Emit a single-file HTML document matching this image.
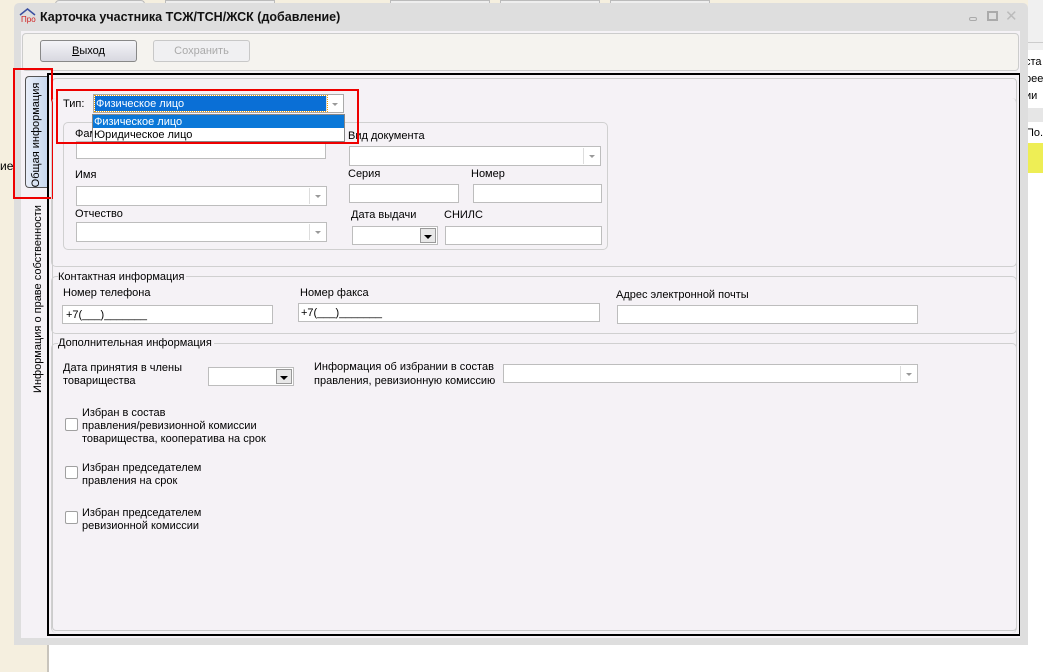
<!DOCTYPE html>
<html><head><meta charset="utf-8"><style>
*{box-sizing:border-box;margin:0;padding:0}
body{width:1043px;height:672px;overflow:hidden;background:#f5efdf;position:relative;font-family:"Liberation Sans",sans-serif;font-size:11px;color:#000}
.a{position:absolute}
.in{position:absolute;background:#fff;border:1px solid #bdbdbd}
.lbl{position:absolute;white-space:nowrap;font-size:11px;margin-top:1px}
.arr{position:absolute;right:1px;top:1px;bottom:1px;width:16px;border-left:1px solid #ddd}
.arr:after{content:"";position:absolute;left:5px;top:50%;margin-top:-1px;border:3px solid transparent;border-top:3px solid #999}
.arr2{position:absolute;right:1px;top:1px;bottom:1px;width:16px;background:#e8e8e8;border:1px solid #999}
.arr2:after{content:"";position:absolute;left:3px;top:50%;margin-top:-1px;border:4px solid transparent;border-top:4px solid #000}
.grp{position:absolute;border:1px solid #d0d0d0;border-radius:5px}
.cb{position:absolute;width:13px;height:13px;border:1px solid #a0a0a0;border-radius:2px;background:#fff}
</style></head><body>
<div class="a" style="left:1028px;top:0;width:15px;height:672px;background:#f0f0f0"></div>
<div class="a" style="left:1028px;top:42px;width:15px;height:1px;background:#ccc"></div>
<div class="a" style="left:1028px;top:50px;width:15px;height:100px;background:#fff"></div>
<div class="lbl" style="left:1025px;top:55px">ста</div>
<div class="lbl" style="left:1025px;top:72px">рее</div>
<div class="lbl" style="left:1025px;top:89px">ии</div>
<div class="a" style="left:1028px;top:108px;width:15px;height:14px;background:#e6e6e6"></div>
<div class="lbl" style="left:1026px;top:126px">По.</div>
<div class="a" style="left:1028px;top:143px;width:15px;height:30px;background:#eeee55"></div>
<div class="a" style="left:1028px;top:173px;width:15px;height:499px;background:#fff"></div>
<div class="a" style="left:47px;top:645px;width:981px;height:27px;background:#fff;border-left:2px solid #c8c4bc"></div>
<div class="lbl" style="left:0;top:158px;font-size:12px">ие</div>
<div class="a" style="left:55px;top:0;width:90px;height:4px;border:1px solid #bbb;border-bottom:0;border-radius:4px 4px 0 0;background:#eee"></div>
<div class="a" style="left:165px;top:0;width:110px;height:4px;border:1px solid #bbb;border-bottom:0;background:#eee"></div>
<div class="a" style="left:390px;top:0;width:100px;height:4px;border:1px solid #bbb;background:#eee"></div>
<div class="a" style="left:500px;top:0;width:100px;height:4px;border:1px solid #bbb;background:#eee"></div>
<div class="a" style="left:610px;top:0;width:100px;height:4px;border:1px solid #bbb;background:#eee"></div>
<div class="a" style="left:14px;top:3px;width:1014px;height:642px;background:#dedede;border-radius:5px 5px 0 0"></div>
<div class="a" style="left:21px;top:31px;width:999px;height:607px;background:#f5f2f6"></div>
<svg class="a" style="left:19px;top:8px" width="17" height="17" viewBox="0 0 17 17"><path d="M1 7 L8.5 1 L16 7" fill="none" stroke="#3a4fa0" stroke-width="1.5"/><text x="2" y="14" font-size="8" fill="#d02020" font-family="Liberation Sans">Про</text></svg>
<div class="lbl" style="left:40px;top:9px;font-weight:bold;font-size:12.5px;color:#111">Карточка участника ТСЖ/ТСН/ЖСК (добавление)</div>
<div class="a" style="left:969px;top:17px;width:8px;height:4px;border:1px solid #aaa;border-radius:2px"></div>
<div class="a" style="left:987px;top:11px;width:11px;height:10px;border:2px solid #aaa"></div>
<div class="lbl" style="left:1005px;top:6px;font-size:15px;color:#bbb">✕</div>
<div class="a" style="left:22px;top:33px;width:997px;height:38px;background:#f5f3ef;border:1px solid #ccc;border-radius:4px"></div>
<div class="a" style="left:40px;top:40px;width:97px;height:22px;border:1px solid #888;border-radius:3px;background:linear-gradient(#f4f4f8,#d8d8e0);text-align:center;line-height:21px"><u>В</u>ыход</div>
<div class="a" style="left:153px;top:40px;width:97px;height:22px;border:1px solid #c8c8c8;border-radius:3px;background:#f0f0f2;text-align:center;line-height:21px;color:#aaa">Сохранить</div>
<div class="a" style="left:47px;top:73px;width:973px;height:563px;border:2px solid #000;border-right-width:1px;background:#f5f2f6"></div>
<div class="a" style="left:52px;top:78px;width:965px;height:553px;border:1px solid #ccc;border-radius:4px"></div>
<div class="a" style="left:25px;top:76px;width:22px;height:112px;background:linear-gradient(90deg,#e8eef8,#c8d8ef);border:1px solid #555;border-right:0;border-radius:4px 0 0 4px"></div>
<div class="lbl" style="left:36px;top:134px;transform:translate(-50%,-50%) rotate(-90deg)">Общая информация</div>
<div class="lbl" style="left:38px;top:298px;transform:translate(-50%,-50%) rotate(-90deg)">Информация о праве собственности</div>
<div class="a" style="left:13px;top:68px;width:40px;height:131px;border:2px solid #e00"></div>
<div class="grp" style="left:51px;top:98px;width:966px;height:169px;border-top:0"></div>
<div class="grp" style="left:63px;top:122px;width:545px;height:128px"></div>
<div class="lbl" style="left:75px;top:127px">Фам</div>
<div class="in" style="left:76px;top:141px;width:250px;height:18px"></div>
<div class="lbl" style="left:75px;top:168px">Имя</div>
<div class="in" style="left:76px;top:186px;width:251px;height:20px"><div class="arr"></div></div>
<div class="lbl" style="left:75px;top:207px">Отчество</div>
<div class="in" style="left:76px;top:222px;width:251px;height:20px"><div class="arr"></div></div>
<div class="lbl" style="left:348px;top:129px">Вид документа</div>
<div class="in" style="left:349px;top:146px;width:252px;height:20px"><div class="arr"></div></div>
<div class="lbl" style="left:348px;top:167px">Серия</div>
<div class="lbl" style="left:471px;top:167px">Номер</div>
<div class="in" style="left:349px;top:184px;width:110px;height:19px"></div>
<div class="in" style="left:473px;top:184px;width:129px;height:19px"></div>
<div class="lbl" style="left:351px;top:208px">Дата выдачи</div>
<div class="lbl" style="left:444px;top:208px">СНИЛС</div>
<div class="in" style="left:352px;top:226px;width:86px;height:19px"><div class="arr2"></div></div>
<div class="in" style="left:445px;top:226px;width:157px;height:19px"></div>
<div class="lbl" style="left:63px;top:97px">Тип:</div>
<div class="in" style="left:93px;top:94px;width:251px;height:19px;border-color:#aaa"><div class="a" style="left:1px;top:1px;width:232px;height:15px;background:#0a6fd6;outline:1px dotted #f0a000;color:#fff;line-height:16px;padding-left:1px">Физическое лицо</div><div class="arr"></div></div>
<div class="a" style="left:92px;top:114px;width:253px;height:28px;background:#fff;border:1px solid #888">
<div style="height:13px;background:#0a78d8;color:#fff;line-height:14px;padding-left:1px">Физическое лицо</div>
<div style="height:13px;line-height:14px;padding-left:1px">Юридическое лицо</div></div>
<div class="a" style="left:56px;top:89px;width:303px;height:55px;border:2px solid #e00"></div>
<div class="grp" style="left:51px;top:276px;width:966px;height:58px"></div>
<div class="lbl" style="left:58px;top:270px;background:#f5f2f6;padding-right:2px">Контактная информация</div>
<div class="lbl" style="left:63px;top:286px">Номер телефона</div>
<div class="lbl" style="left:300px;top:286px">Номер факса</div>
<div class="lbl" style="left:616px;top:288px">Адрес электронной почты</div>
<div class="in" style="left:62px;top:305px;width:211px;height:19px;padding:3px 3px 0">+7(___)_______</div>
<div class="in" style="left:298px;top:303px;width:302px;height:19px;padding:3px 2px 0">+7(___)_______</div>
<div class="in" style="left:617px;top:305px;width:301px;height:19px"></div>
<div class="grp" style="left:51px;top:343px;width:966px;height:290px;border-bottom:0"></div>
<div class="lbl" style="left:58px;top:336px;background:#f5f2f6;padding-right:2px">Дополнительная информация</div>
<div class="lbl" style="left:63px;top:361px;line-height:13px">Дата принятия в члены<br>товарищества</div>
<div class="in" style="left:208px;top:367px;width:86px;height:19px"><div class="arr2"></div></div>
<div class="lbl" style="left:314px;top:359px;line-height:14px">Информация об избрании в состав<br>правления, ревизионную комиссию</div>
<div class="in" style="left:503px;top:364px;width:415px;height:19px"><div class="arr"></div></div>
<div class="cb" style="left:65px;top:418px"></div>
<div class="lbl" style="left:82px;top:406px;line-height:13px">Избран в состав<br>правления/ревизионной комиссии<br>товарищества, кооператива на срок</div>
<div class="cb" style="left:65px;top:466px"></div>
<div class="lbl" style="left:82px;top:461px;line-height:13px">Избран председателем<br>правления на срок</div>
<div class="cb" style="left:65px;top:511px"></div>
<div class="lbl" style="left:82px;top:506px;line-height:13px">Избран председателем<br>ревизионной комиссии</div>
</body></html>
